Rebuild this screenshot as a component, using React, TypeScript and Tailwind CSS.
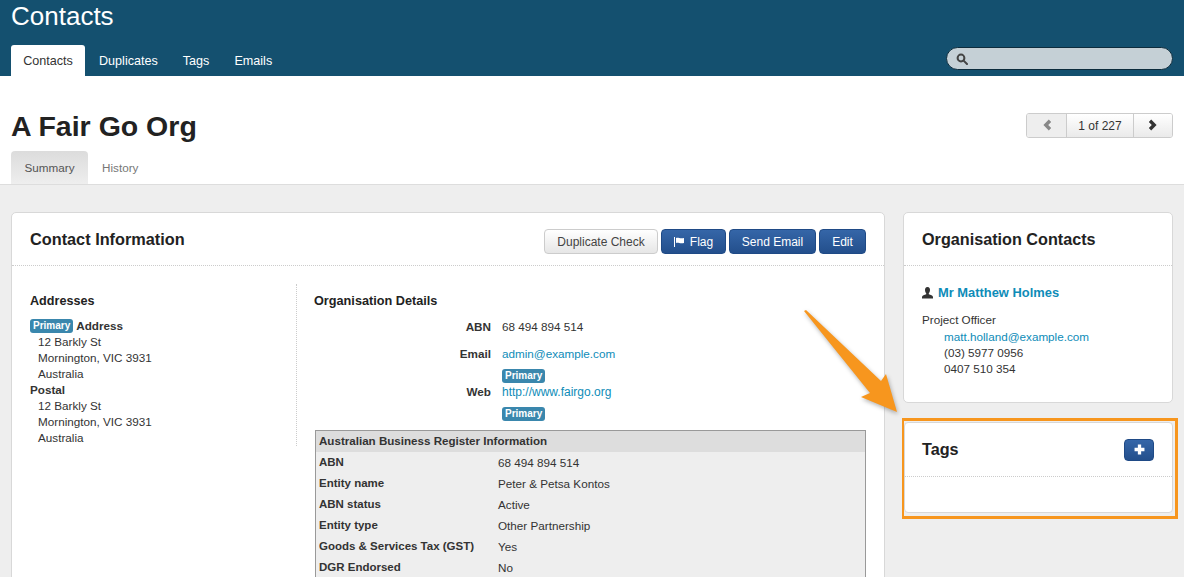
import React from "react";

const Badge = () => (
  <span className="inline-block bg-[#3a87ad] text-white text-[10px] font-bold leading-[14px] h-[14px] px-[3px] rounded-[3px] align-middle">Primary</span>
);

const BlueBtn = ({ children, cls }: { children: React.ReactNode; cls: string }) => (
  <button className={`h-[25px] rounded-[4px] border border-[#1f4a86] bg-gradient-to-b from-[#3566a8] to-[#234f8c] text-white text-[12px] flex items-center justify-center ${cls}`}>{children}</button>
);

const Row = ({ k, v }: { k: string; v: string }) => (
  <div className="flex h-[21px] pl-[3px] items-center">
    <div className="w-[179px] font-bold text-[11.5px] text-[#333] -mt-[2px]">{k}</div>
    <div className="text-[#333]">{v}</div>
  </div>
);

export default function App() {
  return (
    <div className="relative w-[1184px] h-[577px] overflow-hidden bg-[#eeeeee] text-[11.7px] leading-[16px] text-[#333] font-['Liberation_Sans',Arial,sans-serif]">
      <header className="h-[76px] bg-[#14506f] px-[11px] flex flex-col justify-between">
        <h1 className="text-[26px] leading-[32px] text-white mt-0">Contacts</h1>
        <div className="flex items-end justify-between">
          <nav className="flex items-end text-[12.6px] text-white">
            <a className="w-[74px] h-[31px] bg-white text-[#333] rounded-t-[3px] flex items-center justify-center">Contacts</a>
            <a className="ml-[14px] h-[31px] flex items-center">Duplicates</a>
            <a className="ml-[25px] h-[31px] flex items-center">Tags</a>
            <a className="ml-[25px] h-[31px] flex items-center">Emails</a>
          </nav>
          <div className="w-[227px] h-[23px] mb-[6px] rounded-full bg-[#c5d0d6] border border-[#0d2c3d] flex items-center pl-[9px]">
            <svg width="12" height="12" viewBox="0 0 12 12" fill="none" stroke="#444" strokeWidth="2"><circle cx="5" cy="5" r="3.4" /><path d="M7.6 7.6 L11 11" strokeLinecap="round" /></svg>
          </div>
        </div>
      </header>

      <section className="h-[109px] bg-white border-b border-[#dddddd] px-[11px] relative flex flex-col justify-end">
        <div className="flex items-center justify-between mb-[7px]">
          <h2 className="text-[28.5px] leading-[36px] font-bold text-[#222]">A Fair Go Org</h2>
          <div className="flex h-[25px] border border-[#cccccc] rounded-[3px] overflow-hidden mt-[-2px]">
            <div className="w-[39px] bg-[#eeeeee] flex items-center justify-center">
              <svg width="12" height="12" viewBox="0 0 10 10"><path d="M6.5 0.5 L8.5 2.5 L6 5 L8.5 7.5 L6.5 9.5 L2 5 Z" fill="#888" /></svg>
            </div>
            <div className="w-[68px] pt-[1px] border-x border-[#cccccc] bg-gradient-to-b from-white to-[#eaeaea] flex items-center justify-center text-[12px] text-[#333]">1 of 227</div>
            <div className="w-[38px] bg-gradient-to-b from-white to-[#eaeaea] flex items-center justify-center">
              <svg width="12" height="12" viewBox="0 0 10 10"><path d="M3.5 0.5 L1.5 2.5 L4 5 L1.5 7.5 L3.5 9.5 L8 5 Z" fill="#333" /></svg>
            </div>
          </div>
        </div>
        <div className="flex h-[33px]">
          <a className="w-[77px] rounded-t-[4px] bg-gradient-to-b from-[#dcdcdc] to-[#eeeeee] flex items-center justify-center text-[#555]">Summary</a>
          <a className="ml-[14px] flex items-center text-[#777]">History</a>
        </div>
      </section>

      <main className="flex px-[11px] pt-[27px] gap-[18px] items-start">
        <div className="w-[874px] h-[500px] bg-white rounded-[5px] border border-[#d8d8d8] shrink-0">
          <div className="h-[53px] border-b border-dotted border-[#cccccc] flex items-center justify-between pl-[18px] pr-[18px]">
            <h3 className="text-[16.3px] font-bold text-[#222]">Contact Information</h3>
            <div className="flex gap-[3px] mt-[4px]">
              <button className="w-[114px] h-[25px] pt-[1px] rounded-[4px] border border-[#cccccc] bg-gradient-to-b from-white to-[#e6e6e6] text-[#444] text-[12px]">Duplicate Check</button>
              <BlueBtn cls="w-[65px] gap-[5px] pt-[1px]">
                <svg width="11" height="10" viewBox="0 0 11 10" fill="#fff"><rect x="0" y="0" width="1" height="10" /><path d="M2 1 C4 0 6 2 10 1 L10 6 C6 7 4 5 2 6 Z" /></svg>
                Flag
              </BlueBtn>
              <BlueBtn cls="w-[87px] pt-[1px]">Send Email</BlueBtn>
              <BlueBtn cls="w-[47px] pt-[1px]">Edit</BlueBtn>
            </div>
          </div>
          <div className="flex pt-[18px] pl-[18px]">
            <div className="w-[267px] h-[162px] border-r border-dotted border-[#cccccc] shrink-0">
              <h4 className="text-[12.6px] font-bold text-[#222] mt-[9px] mb-[9px]">Addresses</h4>
              <div className="font-bold h-[16px] flex items-center gap-[3px]"><Badge /><span>Address</span></div>
              <div className="pl-[8px]">12 Barkly St<br />Mornington, VIC 3931<br />Australia</div>
              <div className="font-bold">Postal</div>
              <div className="pl-[8px]">12 Barkly St<br />Mornington, VIC 3931<br />Australia</div>
            </div>
            <div className="pl-[17px] w-[570px]">
              <h4 className="text-[12.7px] font-bold text-[#222] mt-[9px]">Organisation Details</h4>
              <div className="flex mt-[10px] h-[27px]">
                <div className="w-[177px] text-right font-bold">ABN</div>
                <div className="ml-[11px]">68 494 894 514</div>
              </div>
              <div className="flex h-[16px]">
                <div className="w-[177px] text-right font-bold">Email</div>
                <a className="ml-[11px] text-[#0e8cb8]">admin@example.com</a>
              </div>
              <div className="h-[16px] pl-[188px] mt-[6px] flex items-center"><Badge /></div>
              <div className="flex h-[16px]">
                <div className="w-[177px] text-right font-bold">Web</div>
                <a className="ml-[11px] text-[12px] text-[#0e8cb8]">http://www.fairgo.org</a>
              </div>
              <div className="h-[16px] pl-[188px] mt-[6px] flex items-center"><Badge /></div>
              <div className="mt-[8px] ml-[1px] w-[551px] border border-[#999999] bg-[#eeeeee]">
                <div className="h-[21px] bg-[#dddddd] flex items-center pl-[3px] pb-[2px] font-bold text-[11.6px]">Australian Business Register Information</div>
                <Row k="ABN" v="68 494 894 514" />
                <Row k="Entity name" v="Peter & Petsa Kontos" />
                <Row k="ABN status" v="Active" />
                <Row k="Entity type" v="Other Partnership" />
                <Row k="Goods & Services Tax (GST)" v="Yes" />
                <Row k="DGR Endorsed" v="No" />
              </div>
            </div>
          </div>
        </div>

        <aside className="w-[270px] shrink-0">
          <div className="h-[191px] bg-white rounded-[5px] border border-[#d8d8d8]">
            <div className="h-[53px] border-b border-dotted border-[#cccccc] flex items-center pl-[18px]">
              <h3 className="text-[16.2px] font-bold text-[#222]">Organisation Contacts</h3>
            </div>
            <div className="pl-[18px] pt-[19px]">
              <div className="flex items-center gap-[5px] text-[#0e8cb8] font-bold text-[12.9px]">
                <svg width="11" height="12" viewBox="0 0 11 12" fill="#333"><path d="M5.5 0 C7.5 0 8 1.6 8 3 C8 4.5 7.3 5.6 6.8 6.2 L6.8 7.2 C8.5 8 11 8.4 11 10 L11 11.5 L0 11.5 L0 10 C0 8.4 2.5 8 4.2 7.2 L4.2 6.2 C3.7 5.6 3 4.5 3 3 C3 1.6 3.5 0 5.5 0 Z" /></svg>
                Mr Matthew Holmes
              </div>
              <div className="mt-[11px]">Project Officer</div>
              <div className="pl-[22px] mt-[1px]">
                <a className="text-[#0e8cb8]">matt.holland@example.com</a><br />(03) 5977 0956<br />0407 510 354
              </div>
            </div>
          </div>
          <div className="mt-[15px] -mr-[5px] -ml-[1px] h-[101px] border-[3px] border-l-[2px] border-[#f7961e] pt-[1px]">
            <div className="h-[91px] w-[269px] bg-white rounded-[4px] border border-[#d8d8d8]">
              <div className="h-[54px] border-b border-dotted border-[#cccccc] flex items-center justify-between pl-[17px] pr-[18px]">
                <h3 className="text-[16.2px] font-bold text-[#222] pb-[2px]">Tags</h3>
                <BlueBtn cls="w-[30px] !h-[22px]">
                  <svg width="11" height="11" viewBox="0 0 10 10" fill="#fff"><path d="M3.5 0.5 H6.5 V3.5 H9.5 V6.5 H6.5 V9.5 H3.5 V6.5 H0.5 V3.5 H3.5 Z" /></svg>
                </BlueBtn>
              </div>
            </div>
          </div>
        </aside>
      </main>

      <svg className="absolute left-0 top-0 pointer-events-none" width="1184" height="577" style={{ filter: "drop-shadow(1px 2px 2px rgba(0,0,0,0.3))" }}>
        <path d="M804 311 L806 310 L881 381 L886 374 L897 412 L861 397 L870 393 Z" fill="#f7961e" />
      </svg>
    </div>
  );
}
